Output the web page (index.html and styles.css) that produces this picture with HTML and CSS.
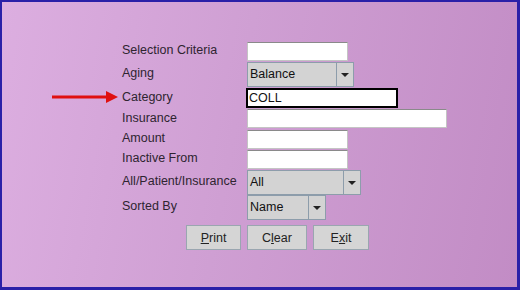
FILE: index.html
```html
<!DOCTYPE html>
<html lang="en">
<head>
  <meta charset="UTF-8">
  <title>Report Criteria</title>
  <link rel="stylesheet" href="styles.css">
</head>
<body>
  <div class="frame">
    <div class="form">
      <label class="lbl">Selection Criteria</label>
      <div class="field"><input class="text w101" type="text"></div>

      <label class="lbl">Aging</label>
      <div class="field">
        <div class="combo w107"><span class="value">Balance</span><span class="drop"></span></div>
      </div>

      <label class="lbl marked">
        <svg class="pointer" width="68" height="12" viewBox="0 0 68 12">
          <rect x="0" y="4.5" width="56" height="3" fill="#e01010"/>
          <polygon points="54,0 66,6 54,12" fill="#e01010"/>
        </svg>
        Category
      </label>
      <div class="field"><input class="text focus" type="text" value="COLL"></div>

      <label class="lbl">Insurance</label>
      <div class="field"><input class="text w200" type="text"></div>

      <label class="lbl">Amount</label>
      <div class="field"><input class="text w101" type="text"></div>

      <label class="lbl">Inactive From</label>
      <div class="field"><input class="text w101" type="text"></div>

      <label class="lbl">All/Patient/Insurance</label>
      <div class="field">
        <div class="combo w114"><span class="value">All</span><span class="drop"></span></div>
      </div>

      <label class="lbl">Sorted By</label>
      <div class="field">
        <div class="combo w79"><span class="value">Name</span><span class="drop"></span></div>
      </div>

      <div class="buttons">
        <button class="btn b-print"><u>P</u>rint</button>
        <button class="btn b-clear">C<u>l</u>ear</button>
        <button class="btn b-exit">E<u>x</u>it</button>
      </div>
    </div>
  </div>
</body>
</html>
```

FILE: styles.css
```css
/* General styling */
* {
  box-sizing: border-box;
}

body {
  margin: 0;
  font-family: 'Liberation Sans', Arial, sans-serif;
  font-size: 12.5px;
  color: #2e2430;
}

.frame {
  width: 520px;
  height: 290px;
  border-style: solid;
  border-color: #2a20a8;
  border-width: 2px 3px 3px 2px;
  background: linear-gradient(100deg, #dcaee0 0%, #cf9fd3 45%, #c28cc5 100%);
  padding: 40px 0 0 120px;
}

.form {
  display: grid;
  grid-template-columns: 125px auto;
  grid-template-rows: 20px 26px 21px 21px 20px 20px 25px 25px;
}

.lbl {
  align-self: center;
  margin-bottom: 4px;
  line-height: 16px;
  white-space: nowrap;
}

.marked {
  position: relative;
}

.pointer {
  position: absolute;
  right: 100%;
  top: 2px;
  margin-right: 2px;
}

.field {
  display: flex;
  align-items: flex-start;
}

.text {
  height: 19px;
  margin: 0;
  padding: 0 2px;
  font: inherit;
  color: #111;
  background: #fff;
  border: 1px solid #c4c4c4;
  border-top-color: #8a8a8a;
  outline: none;
}

.w101 { width: 101px; }
.w200 { width: 200px; }

.focus {
  width: 152px;
  height: 20px;
  margin-left: -1px;
  border: 2px solid #000;
  padding: 0 1px;
}

.combo {
  display: flex;
  height: 25px;
  background: #d3d3d3;
  border: 1px solid #8d9dab;
}

.w107 { width: 107px; }
.w114 { width: 114px; }
.w79 { width: 79px; }

.combo .value {
  flex: 1;
  padding: 4px 0 0 2px;
  color: #111;
}

.combo .drop {
  width: 17px;
  border-left: 1px solid #8d9dab;
  position: relative;
}

.combo .drop::after {
  content: "";
  position: absolute;
  left: 4px;
  top: 10px;
  border-left: 4px solid transparent;
  border-right: 4px solid transparent;
  border-top: 4px solid #222;
}

.buttons {
  grid-column: 1 / 3;
  display: flex;
  gap: 6px;
  margin: 5px 0 0 64px;
}

.btn {
  height: 25px;
  padding: 0;
  font: inherit;
  color: #222;
  background: #d5d5d5;
  border: 1px solid #9aa6b0;
  border-radius: 0;
}

.b-print { width: 55px; }
.b-clear { width: 60px; }
.b-exit { width: 56px; }
```
